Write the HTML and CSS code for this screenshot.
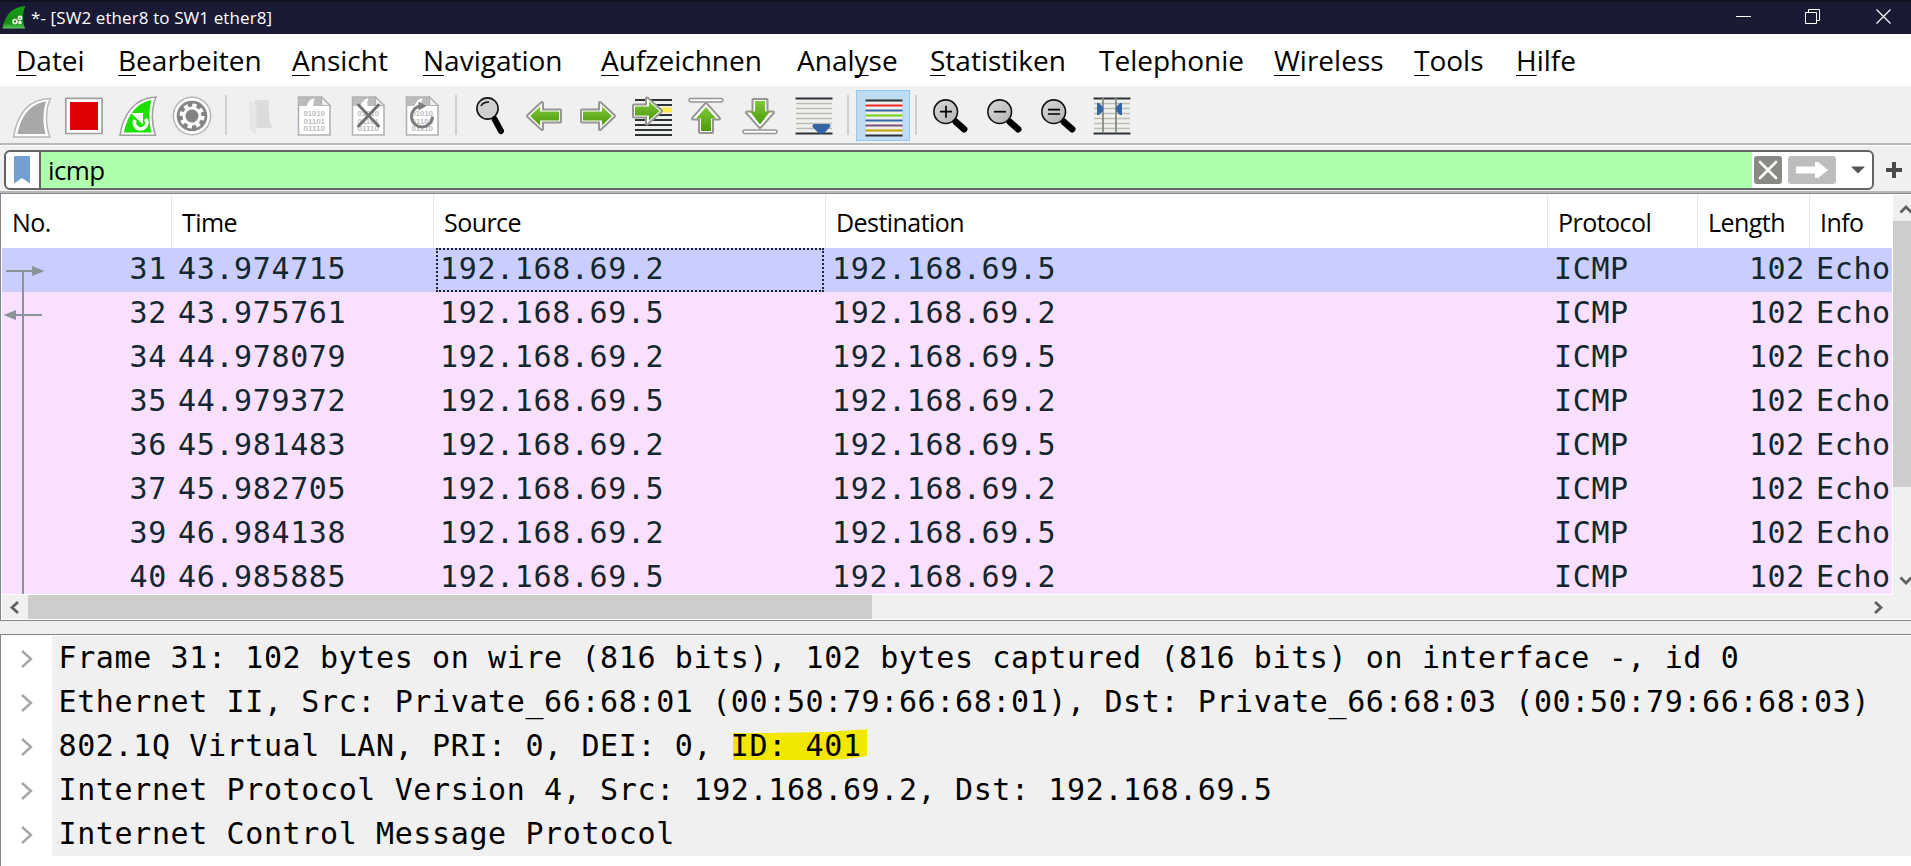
FILE: index.html
```html
<!DOCTYPE html>
<html lang="de">
<head>
<meta charset="utf-8">
<title>*- [SW2 ether8 to SW1 ether8]</title>
<link rel="stylesheet" href="styles.css">
</head>
<body>
<svg class="defs" width="0" height="0">
  <defs>
    <linearGradient id="green" x1="0" y1="0" x2="0" y2="1"><stop offset="0" stop-color="#80c83c"/><stop offset="1" stop-color="#4a9a06"/></linearGradient>
    <linearGradient id="fin" x1="0" y1="0" x2="0" y2="1"><stop offset="0" stop-color="#14a014"/><stop offset=".75" stop-color="#168c16"/><stop offset="1" stop-color="#5cc85c"/></linearGradient>
    <linearGradient id="lens" x1="0" y1="0" x2="1" y2="1"><stop offset="0" stop-color="#d8d8d8"/><stop offset="1" stop-color="#b4b4b4"/></linearGradient>
    <g id="doc">
      <path d="M1 1H24L32.500 9.500V39H1Z" fill="#fff"/>
      <path d="M1 1H24V10H1Z" fill="#bcbcbc"/>
      <path d="M9 11Q10 4 17 2Q15 6 16 11Z" fill="#fff"/>
      <path d="M1 1H24L32.500 9.500V39H1Z" fill="none" stroke="#b2b2b2" stroke-width="1.600"/>
      <path d="M24 1V9.500H32.500Z" fill="#eee" stroke="#b2b2b2" stroke-width="1.200"/>
      <g class="bits"><text x="6" y="20" textLength="21.500" lengthAdjust="spacingAndGlyphs">01010</text><text x="6" y="27.500" textLength="21.500" lengthAdjust="spacingAndGlyphs">01101</text><text x="6" y="35" textLength="21.500" lengthAdjust="spacingAndGlyphs">01110</text></g>
    </g>
    <g id="mag">
      <path d="M23 23L31.500 30.500" stroke="#000" stroke-width="6.500" stroke-linecap="round"/>
      <circle cx="13" cy="13" r="11.800" fill="url(#lens)" stroke="#111" stroke-width="1.600"/>
    </g>
  </defs>
</svg>
<header class="title-bar">
  <svg class="app-icon" width="26" height="26" viewBox="1 4 26 26"><path d="M2.500 27.500C5 14 12 6 25.500 5C22 12 22.500 20 25 27.500Z" fill="url(#fin)"/><g fill="none" stroke="#e4f4e4" stroke-width="1.700"><circle cx="15" cy="20.500" r="2"/><circle cx="20" cy="17" r="1.600"/><circle cx="20" cy="21.500" r="1"/></g></svg>
  <span class="title">*- [SW2 ether8 to SW1 ether8]</span>
  <svg class="win-buttons" width="175" height="34" viewBox="1730 0 175 34" fill="none" stroke="#fff"><path d="M1736 16.500H1751"/><path d="M1805.500 12.500H1816.500V23.500H1805.500ZM1808.500 12V9.500H1819.500V20.500H1817"/><path d="M1876.500 9.500L1890.500 23.500M1890.500 9.500L1876.500 23.500" stroke-width="1.200"/></svg>
</header>
<nav class="menu">
  <span><u>D</u>atei</span><span><u>B</u>earbeiten</span><span><u>A</u>nsicht</span><span><u>N</u>avigation</span><span><u>A</u>ufzeichnen</span><span>Anal<u>y</u>se</span><span><u>S</u>tatistiken</span><span>Telephonie</span><span><u>W</u>ireless</span><span><u>T</u>ools</span><span><u>H</u>ilfe</span>
</nav>
<div class="toolbar">
  <div class="group">
    <svg viewBox="3 90 54 51"><path d="M13.500 137C17 116 27 99 50.500 98.500C45 110 45.500 126 50 137Z" fill="#fff" stroke="#b8b8b8" stroke-width="1.500"/><path d="M17.500 134C21 117 29 104 46 101.500C42.500 113 43 125 45.500 134Z" fill="#a8a8a8"/></svg>
    <svg viewBox="57 90 54 51"><path d="M65.800 98.300H102V133.500H65.800Z" fill="#fff" stroke="#a0a0a0" stroke-width="1.700"/><path d="M70 102H98V130H70Z" fill="#dc0000"/></svg>
    <svg viewBox="111 90 54 51"><path d="M120 135.300C123 115 134 98 156 97C151 109 151.500 124 155.500 135.300Z" fill="#fff" stroke="#a0a0a0" stroke-width="1.500"/><path d="M124 132.500C127 116 136 103 151.500 100C148.500 111 149 123 151.500 132.500Z" fill="#1ee000"/><path d="M145.500 119A6.200 6.200 0 1 1 135 120" fill="none" stroke="#fff" stroke-width="3.700"/><path d="M131 113H143V124.500Z" fill="#fff"/></svg>
    <svg viewBox="165 90 54 51"><circle cx="192" cy="116" r="18.700" fill="#fff" stroke="#b4b4b4" stroke-width="1.500"/><circle cx="192" cy="116" r="15.300" fill="#848484"/><circle cx="192" cy="116" r="10.600" fill="none" stroke="#fff" stroke-width="4" stroke-dasharray="4.160 4.160"/><circle cx="192" cy="116" r="8" fill="none" stroke="#fff" stroke-width="3"/><circle cx="192" cy="116" r="6.200" fill="#848484"/></svg>
  </div>
  <i class="sep s1"></i>
  <div class="group">
    <svg viewBox="232.500 90 54 51"><path d="M254 100H268L269 118V128H255Z" fill="#dedede"/><path d="M255 128H272L268 118V103H256Z" fill="#dcdcdc"/><path d="M248 100L256 105V134L249 130V114Z" fill="#e6e6e6"/></svg>
    <svg viewBox="286.500 90 54 51"><use href="#doc" x="297" y="96"/></svg>
    <svg viewBox="340.500 90 54 51"><use href="#doc" x="351" y="96"/><path d="M358 105L378 126M378 105L358 126" stroke="#707070" stroke-width="3" stroke-linecap="round"/></svg>
    <svg viewBox="394.500 90 54 51"><use href="#doc" x="405" y="96"/><path d="M432 116.500A10.500 10.500 0 1 1 420 106" fill="none" stroke="#7c7c7c" stroke-width="3"/><path d="M418 101.500L426 106L418 110.500Z" fill="#7c7c7c"/></svg>
  </div>
  <i class="sep s2"></i>
  <div class="group">
    <svg viewBox="463 90 54 51"><path d="M494.500 119L501 131" stroke="#000" stroke-width="6" stroke-linecap="round"/><circle cx="487.500" cy="108.500" r="10.600" fill="#cfcfcf" stroke="#111" stroke-width="1.600"/><path d="M481 106Q483 102 489 102" fill="none" stroke="#111" stroke-width="1.600"/></svg>
    <svg viewBox="517 90 54 51"><path class="arrow-rim" d="M528 116L542 103V110.500H560V121.500H542V129Z"/><path d="M530 116L540 106.500V111.500H559V120.500H540V125.500Z" fill="url(#green)"/></svg>
    <svg viewBox="571 90 54 51"><path class="arrow-rim" d="M614 116L600 103V110.500H582V121.500H600V129Z"/><path d="M612 116L602 106.500V111.500H583V120.500H602V125.500Z" fill="url(#green)"/></svg>
    <svg viewBox="625 90 54 51"><path d="M635 100H672M635 105H672M650 115H672M635 120H672M635 125H672M635 130H672M635 135H672" stroke="#2e3436" stroke-width="1.800"/><path d="M655 107.500H672V112.500H655Z" fill="#fce94f"/><path class="arrow-rim" d="M661 111L647 98.500V105.500H634V116.500H647V123.500Z"/><path d="M659.500 111L649 101.500V106.500H635V115.500H649V120.500Z" fill="url(#green)"/></svg>
    <svg viewBox="679 90 54 51"><rect x="689" y="98.500" width="34" height="3.500" rx="1.700" fill="#fff" stroke="#949494" stroke-width="1.500"/><path class="arrow-rim" d="M706 104L693 118.500H700V132H712V118.500H719Z"/><path d="M706 107L696 118.500H701V131H711V118.500H716Z" fill="url(#green)"/></svg>
    <svg viewBox="733 90 54 51"><rect x="743" y="130" width="34" height="3.500" rx="1.700" fill="#fff" stroke="#949494" stroke-width="1.500"/><path class="arrow-rim" d="M760 127L747 112.500H753.500V100H766.500V112.500H773Z"/><path d="M760 124.500L750 111.500H755V101H765V111.500H770Z" fill="url(#green)"/></svg>
    <svg viewBox="787 90 54 51"><path d="M796 99.500H832V132.500H796Z" fill="#f0f0ec"/><path d="M796 103.500H832M796 108.500H832M796 113.500H832M796 118.500H832M796 123.500H832M796 128.500H832" stroke="#babdb6" stroke-width="1.400"/><path d="M795.500 98.500H832.500M795.500 133.500H832.500" stroke="#2e3436" stroke-width="1.800"/><path d="M814 124H829Q832 126 829 128L824 133.500H819L813.500 128Q811 125.500 814 124Z" fill="#3465a4"/></svg>
  </div>
  <i class="sep s3"></i>
  <div class="group checked">
    <svg viewBox="856 90 54 51"><path d="M866 100H902V136H866Z" fill="#eeeeec"/><g stroke-width="2"><path d="M865.500 100.500H902.500M865.500 135.500H902.500" stroke="#2e3436"/><path d="M865.500 105.500H902.500" stroke="#ef2929"/><path d="M865.500 110.500H902.500M865.500 120.500H902.500" stroke="#3465a4"/><path d="M865.500 115.500H902.500" stroke="#73d216"/><path d="M865.500 125.500H902.500" stroke="#75507b"/><path d="M865.500 130.500H902.500" stroke="#c4a000"/></g></svg>
  </div>
  <i class="sep s4"></i>
  <div class="group">
    <svg viewBox="923 90 54 51"><use href="#mag" x="932.700" y="98.700"/><path d="M940 111.700H952M946 105.700V117.700" stroke="#000" stroke-width="1.700"/></svg>
    <svg viewBox="977 90 54 51"><use href="#mag" x="986.700" y="98.700"/><path d="M994 111.700H1006" stroke="#000" stroke-width="1.700"/></svg>
    <svg viewBox="1031 90 54 51"><use href="#mag" x="1040.700" y="98.700"/><path d="M1048 109.700H1060M1048 114H1060" stroke="#000" stroke-width="1.700"/></svg>
    <svg viewBox="1085 90 54 51"><path d="M1094 99.500H1130V132.500H1094Z" fill="#f0f0ec"/><path d="M1094 103.500H1130M1094 108.500H1130M1094 113.500H1130M1094 118.500H1130M1094 123.500H1130M1094 128.500H1130" stroke="#babdb6" stroke-width="1.400"/><path d="M1093.500 98.500H1130.500M1093.500 133.500H1130.500" stroke="#2e3436" stroke-width="1.800"/><path d="M1103 98V133M1116 98V133" stroke="#888a85" stroke-width="1.800"/><path d="M1097 103H1099L1103 107V111L1099 115H1097ZM1122 103H1120L1116 107V111L1120 115H1122Z" fill="#3465a4"/></svg>
  </div>
</div>
<div class="filter-bar">
  <div class="filter">
    <div class="bookmark"><svg width="16" height="28" viewBox="0 0 16 28"><path d="M0 1Q0 0 1 0H15Q16 0 16 1V27.500L8 22L0 27.500Z" fill="#729fcf"/></svg></div>
    <div class="expression">icmp</div>
    <svg width="120" height="36" viewBox="1752 152 120 36"><rect x="1754" y="156" width="28" height="28" rx="3" fill="#888a85"/><path d="M1760 162L1776 178M1776 162L1760 178" stroke="#fff" stroke-width="2.600" stroke-linecap="round"/><rect x="1788" y="156" width="48" height="28" rx="3" fill="#bdbdbd"/><path d="M1797 166.500H1815V162H1818L1828 170L1818 178H1815V173.500H1797Q1796 173.500 1796 172V168Q1796 166.500 1797 166.500Z" fill="#fff"/><path d="M1851 166.500H1865L1858 173.500Z" fill="#555"/></svg>
  </div>
  <svg class="plus" width="16" height="16" viewBox="0 0 16 16"><path d="M0 8H16M8 0V16" stroke="#4a4a4a" stroke-width="4"/></svg>
</div>
<section class="packets">
  <div class="packet-view">
    <div class="row head"><span>No.</span><span>Time</span><span>Source</span><span>Destination</span><span>Protocol</span><span>Length</span><span>Info</span></div>
    <div class="rows">
      <div class="row selected"><span>31</span><span>43.974715</span><span class="focus">192.168.69.2</span><span>192.168.69.5</span><span>ICMP</span><span>102</span><span>Echo</span></div>
      <div class="row"><span>32</span><span>43.975761</span><span>192.168.69.5</span><span>192.168.69.2</span><span>ICMP</span><span>102</span><span>Echo</span></div>
      <div class="row"><span>34</span><span>44.978079</span><span>192.168.69.2</span><span>192.168.69.5</span><span>ICMP</span><span>102</span><span>Echo</span></div>
      <div class="row"><span>35</span><span>44.979372</span><span>192.168.69.5</span><span>192.168.69.2</span><span>ICMP</span><span>102</span><span>Echo</span></div>
      <div class="row"><span>36</span><span>45.981483</span><span>192.168.69.2</span><span>192.168.69.5</span><span>ICMP</span><span>102</span><span>Echo</span></div>
      <div class="row"><span>37</span><span>45.982705</span><span>192.168.69.5</span><span>192.168.69.2</span><span>ICMP</span><span>102</span><span>Echo</span></div>
      <div class="row"><span>39</span><span>46.984138</span><span>192.168.69.2</span><span>192.168.69.5</span><span>ICMP</span><span>102</span><span>Echo</span></div>
      <div class="row"><span>40</span><span>46.985885</span><span>192.168.69.5</span><span>192.168.69.2</span><span>ICMP</span><span>102</span><span>Echo</span></div>
      <svg class="related" width="50" height="346" viewBox="2 248 50 346"><path d="M6 271H34M23 270V594M14 315H42" fill="none" stroke="#8a9396" stroke-width="2"/><path d="M32 266L44.500 271L32 276ZM16 310L3.500 315L16 320Z" fill="#8a9396"/></svg>
    </div>
  </div>
  <div class="vscroll">
    <svg width="18" height="26" viewBox="1893 196 18 26"><path d="M1900.500 213.500L1906 208L1911.500 213.500" fill="none" stroke="#606060" stroke-width="2.800"/></svg>
    <div class="vthumb"></div>
    <svg width="18" height="26" viewBox="1893 568 18 26"><path d="M1900.500 578.500L1906 584L1911.500 578.500" fill="none" stroke="#606060" stroke-width="2.800"/></svg>
  </div>
  <div class="hscroll">
    <svg width="26" height="24" viewBox="2 595 26 24"><path d="M18 602L12 607.500L18 613" fill="none" stroke="#606060" stroke-width="2.800"/></svg>
    <div class="hthumb"></div>
    <svg class="right" width="26" height="24" viewBox="1866 595 26 24"><path d="M1875 602L1881 607.500L1875 613" fill="none" stroke="#606060" stroke-width="2.800"/></svg>
  </div>
</section>
<section class="details">
  <div class="node"><svg class="chev" viewBox="0 0 12 18"><path d="M1 1L10 9L1 17"/></svg><p>Frame 31: 102 bytes on wire (816 bits), 102 bytes captured (816 bits) on interface -, id 0</p></div>
  <div class="node"><svg class="chev" viewBox="0 0 12 18"><path d="M1 1L10 9L1 17"/></svg><p>Ethernet II, Src: Private_66:68:01 (00:50:79:66:68:01), Dst: Private_66:68:03 (00:50:79:66:68:03)</p></div>
  <div class="node"><svg class="chev" viewBox="0 0 12 18"><path d="M1 1L10 9L1 17"/></svg><p>802.1Q Virtual LAN, PRI: 0, DEI: 0, <span class="marked"><svg class="marker" width="134" height="32" viewBox="0 0 134 32"><path d="M0 4Q60 4 95 3L120 1L134 0.500V27L112 30L90 31H0Z" fill="#f1e700"/></svg><span class="marked-text">ID: 401</span></span></p></div>
  <div class="node"><svg class="chev" viewBox="0 0 12 18"><path d="M1 1L10 9L1 17"/></svg><p>Internet Protocol Version 4, Src: 192.168.69.2, Dst: 192.168.69.5</p></div>
  <div class="node"><svg class="chev" viewBox="0 0 12 18"><path d="M1 1L10 9L1 17"/></svg><p>Internet Control Message Protocol</p></div>
</section>
</body>
</html>
```
FILE: styles.css
```css
* { box-sizing: border-box; }
body { margin: 0; width: 1911px; height: 866px; overflow: hidden; background: #f0f0f0; color: #000; font-family: "Open Sans", "Noto Sans", sans-serif; display: flex; flex-direction: column; }
svg { display: block; flex: none; }
.defs { position: absolute; }

.title-bar { height: 34px; flex: none; background: #1a1a35; border-top: 2px solid #10101f; display: flex; align-items: center; padding: 0 6px 0 1px; color: #fff; }
.title { margin-left: 4px; font-size: 17px; letter-spacing: 0.1px; line-height: 30px; white-space: pre; }
.win-buttons { margin-left: auto; margin-top: -2px; }

.menu { height: 53px; flex: none; background: #fff; border-bottom: 1px solid #f0f0f0; box-shadow: inset 0 -1px #fff; padding-left: 16px; display: grid; grid-template-columns: 102px 174px 131px 178px 196px 133px 169px 175px 140px 102px 120px; font-size: 28px; line-height: 52px; white-space: nowrap; }
.menu u { text-decoration-thickness: 1px; text-underline-offset: 4px; text-decoration-skip-ink: none; }

.toolbar { height: 58px; flex: none; border-bottom: 2px solid #b8b8b8; padding: 3px 0 0 3px; display: flex; }
.group { display: flex; height: 51px; }
.group svg { width: 54px; height: 51px; }
.checked { background: #c0dcf3; box-shadow: inset 0 0 0 1px #90c8f6; }
.sep { flex: none; width: 2px; height: 40px; background: #d0d0d0; }
.s1 { margin: 5px 5.5px 0 6px; }
.s2 { margin: 5px 6px 0 6.5px; }
.s3 { margin: 5px 7px 0 6px; }
.s4 { margin: 5px 6px 0 5px; }
.arrow-rim { fill: #fff; stroke: #94968f; stroke-width: 4px; stroke-linejoin: round; paint-order: stroke; }
.bits { font: bold 7px "Liberation Sans", sans-serif; fill: #bcbcbc; }

.filter-bar { height: 48px; flex: none; border-top: 1px solid #fff; border-bottom: 2px solid #b8b8b8; padding: 4px 5px 1px 4px; display: flex; align-items: center; }
.filter { width: 1870px; height: 40px; border: 2px solid #646464; border-radius: 6px; background: #fff; display: flex; overflow: hidden; }
.bookmark { width: 35px; border-right: 2px solid #646464; padding: 4px 0 0 8px; }
.expression { flex: 1; background: #afffaf; padding-left: 7px; font-size: 26px; line-height: 37px; letter-spacing: -0.6px; }
.plus { margin-left: 12px; }

.packets { height: 428px; flex: none; border: 1px solid #828790; border-right: 0; background: #fff; display: grid; grid-template: 400px 24px / 1891px 18px; padding: 1px 0 1px 1px; column-gap: 0; }
.packet-view { width: 1890px; overflow: hidden; height: 399px; }
.row { display: grid; grid-template-columns: 170px 262px 392px 722px 150px 112px 82px; height: 44px; }
.head { height: 53px; font-size: 25px; line-height: 54px; letter-spacing: -0.55px; }
.head span { border-right: 1px solid #e5e5e5; padding-left: 10px; }
.head span:last-child { border-right: 0; }
.rows { position: relative; height: 346px; overflow: hidden; background: #fae0ff; color: #12272e; font: 30px/41px "DejaVu Sans Mono", monospace; letter-spacing: 0.63px; }
.rows .row span { padding-left: 6px; white-space: nowrap; overflow: hidden; }
.rows .row span:nth-child(1), .rows .row span:nth-child(6) { text-align: right; padding: 0 5px 0 0; }
.selected { background: #c9ceff; }
.rows .focus { outline: 2px dotted #12272e; outline-offset: -2px; margin: 0 2px 0 2px; padding-left: 4px !important; }
.related { position: absolute; left: 0; top: 0; }

.vscroll { background: #f0f0f0; display: flex; flex-direction: column; }
.vthumb { height: 266px; margin-bottom: 80px; background: #cdcdcd; }
.hscroll { grid-column: 1 / -1; background: #f0f0f0; display: flex; }
.hthumb { width: 844px; background: #cdcdcd; }
.right { margin-left: 994px; }

.details { margin-top: 13px; height: 232px; flex: none; background: #fff; border: solid #828790; border-width: 1px 0 0 1px; padding-top: 1px; }
.node { display: flex; height: 44px; align-items: stretch; }
.chev { width: 12px; height: 18px; margin: 14px 19px 0 20px; fill: none; stroke: #a6a6a6; stroke-width: 2.4px; }
.node p { flex: 1; margin: 0; padding-left: 6.5px; background: #f0f0f0; font: 30px/43px "DejaVu Sans Mono", monospace; letter-spacing: 0.615px; white-space: pre; }
.marked { position: relative; }
.marker { position: absolute; left: 2px; top: 1px; }
.marked-text { position: relative; }
```
